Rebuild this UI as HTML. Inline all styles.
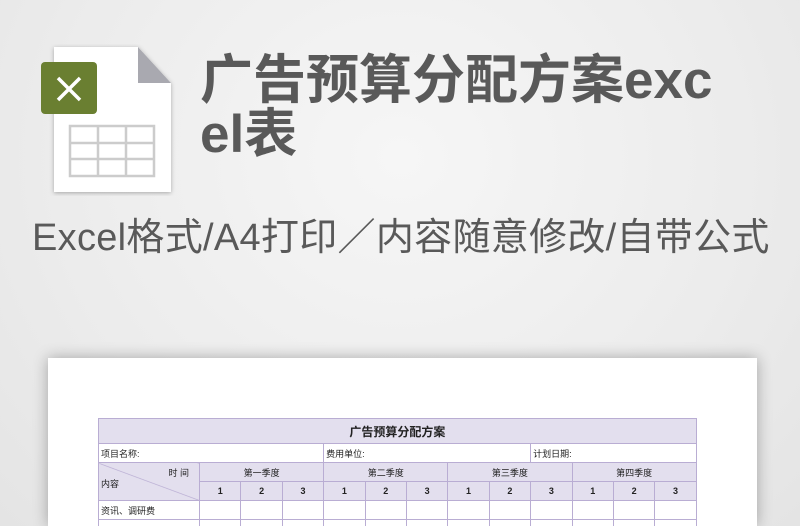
<!DOCTYPE html>
<html style="width:800px;height:526px;overflow:hidden"><head><meta charset="utf-8"><style>
*{margin:0;padding:0;box-sizing:border-box}
body{width:800px;height:526px;overflow:hidden;background:radial-gradient(ellipse at 50% 30%,#f6f6f6 0%,#ececec 60%,#e4e4e4 100%);font-family:"Liberation Sans","Noto Sans CJK SC",sans-serif;position:relative}
.t{position:absolute;left:200px;top:54px;font-size:53px;font-weight:bold;color:#595959;line-height:54px;width:560px}
.s{position:absolute;left:32px;top:214px;font-size:38px;color:#595959;white-space:nowrap;line-height:48px;letter-spacing:0.3px}
.card{position:absolute;left:48px;top:358px;width:709px;height:168px;background:#fff;box-shadow:0 0 14px rgba(0,0,0,.3)}
table{position:absolute;left:98px;top:418px;border-collapse:collapse;font-size:9px;color:#222;table-layout:fixed}
td{border:1px solid #b9add3;height:19px;padding:0 2px;white-space:nowrap}
.h{background:#e3dfee;text-align:center}
.n{font-weight:bold}
</style></head><body>
<svg style="position:absolute;left:38px;top:44px" width="140" height="152" viewBox="0 0 140 152">
<defs><filter id="f"><feDropShadow dx="0" dy="1" stdDeviation="2" flood-opacity=".3"/></filter></defs>
<path d="M16 3 H100 L133 39 V148 H16 Z" fill="#fff" filter="url(#f)"/>
<path d="M100 3 L133 39 H100 Z" fill="#a9a9b0"/>
<rect x="3" y="18" width="56" height="52" rx="4" fill="#6a7f31"/>
<path d="M20 34 L42 56 M42 34 L20 56" stroke="#fff" stroke-width="3.5"/>
<g fill="none" stroke="#ccc" stroke-width="2.5"><rect x="32" y="82" width="84" height="50"/><path d="M32 99H116M32 115H116M60 82V132M88 82V132"/></g>
</svg>
<div class="t">广告预算分配方案exc<br>el表</div>
<div class="s">Excel格式/A4打印／内容随意修改/自带公式</div>
<div class="card"></div>
<table>
<colgroup><col style="width:101px"><col span="12" style="width:41.4px"></colgroup>
<tr><td class="h" colspan="13" style="height:25px;font-size:12px;font-weight:bold">广告预算分配方案</td></tr>
<tr><td colspan="4">项目名称:</td><td colspan="5">费用单位:</td><td colspan="4">计划日期:</td></tr>
<tr><td class="h" rowspan="2" style="position:relative;text-align:left;background:linear-gradient(to top right,#e3dfee 49%,#b9add3 50%,#e3dfee 51%)"><span style="position:absolute;right:10px;top:3px">时 间</span><span style="position:absolute;left:2px;bottom:10px">内容</span></td><td class="h" colspan="3">第一季度</td><td class="h" colspan="3">第二季度</td><td class="h" colspan="3">第三季度</td><td class="h" colspan="3">第四季度</td></tr>
<tr class="n"><td class="h">1</td><td class="h">2</td><td class="h">3</td><td class="h">1</td><td class="h">2</td><td class="h">3</td><td class="h">1</td><td class="h">2</td><td class="h">3</td><td class="h">1</td><td class="h">2</td><td class="h">3</td></tr>
<tr><td>资讯、调研费</td><td></td><td></td><td></td><td></td><td></td><td></td><td></td><td></td><td></td><td></td><td></td><td></td></tr>
<tr><td>&nbsp;</td><td></td><td></td><td></td><td></td><td></td><td></td><td></td><td></td><td></td><td></td><td></td><td></td></tr>
</table>
</body></html>
